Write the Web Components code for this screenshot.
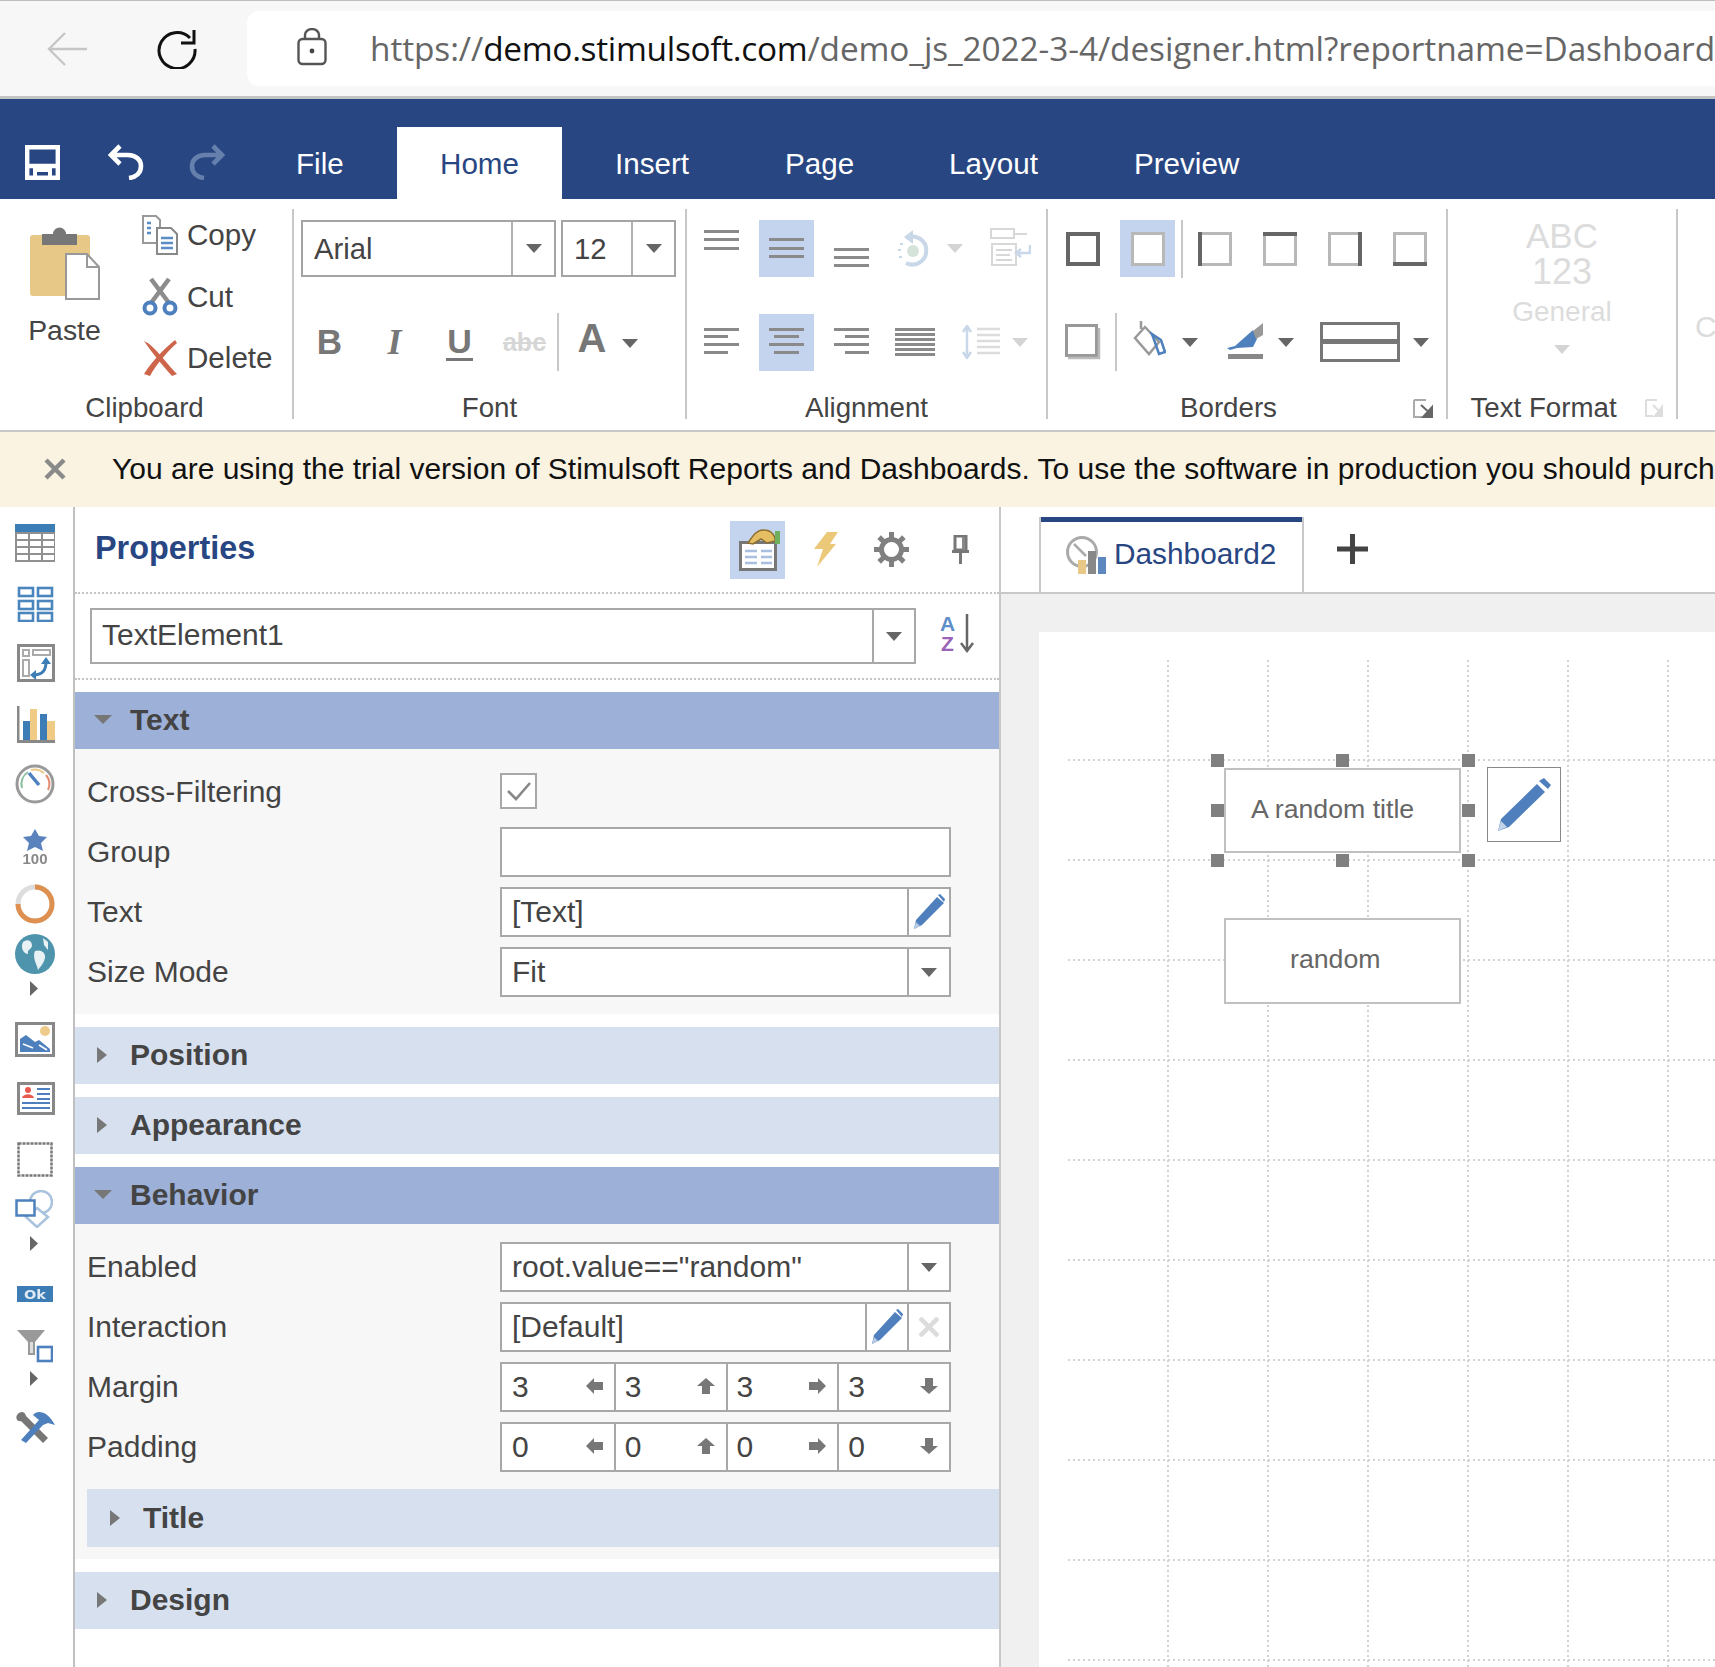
<!DOCTYPE html>
<html lang="en"><head><meta charset="utf-8"><title>Stimulsoft Designer</title>
<style>html,body{margin:0;padding:0;width:1715px;height:1667px;overflow:hidden;background:#fff;font-family:"Liberation Sans",Arial,sans-serif}</style>
</head><body>
<browser-bar></browser-bar>
<ribbon-tabs></ribbon-tabs>
<ribbon-bar>
  <ribbon-group label="Clipboard" style="width:292px" flat lpad="3">
    <r-row style="height:auto;align-items:flex-start">
      <paste-btn></paste-btn>
      <small-btns>
        <small-btn icon="copy" label="Copy"></small-btn>
        <small-btn icon="cut" label="Cut"></small-btn>
        <small-btn icon="del" label="Delete"></small-btn>
      </small-btns>
    </r-row>
  </ribbon-group>
  <ribbon-group label="Font" style="width:391px">
    <r-row style="padding-left:7px;gap:5px">
      <font-combo value="Arial" style="width:255px"></font-combo>
      <font-combo value="12" style="width:115px"></font-combo>
    </r-row>
    <r-row style="padding-left:3px;height:58px">
      <font-tool kind="b">B</font-tool><font-tool kind="i">I</font-tool><font-tool kind="u">U</font-tool><font-tool kind="s">abc</font-tool>
      <r-sep></r-sep>
      <font-tool kind="a">A</font-tool><ui-icon name="caret" style="margin:3px 0 0 9px"></ui-icon>
    </r-row>
  </ribbon-group>
  <ribbon-group label="Alignment" style="width:359px">
    <r-row style="padding-left:7px;gap:10px">
      <r-cell icon="vtop"></r-cell><r-cell icon="vmid" active></r-cell><r-cell icon="vbot"></r-cell>
      <ui-icon name="rotate" style="margin-left:8px"></ui-icon><ui-icon name="caretoff" style="margin-left:7px"></ui-icon>
      <ui-icon name="wrap" style="margin:-4px 0 0 17px"></ui-icon>
    </r-row>
    <r-row style="padding-left:7px;gap:10px;height:58px">
      <r-cell icon="hleft"></r-cell><r-cell icon="hcen" active></r-cell><r-cell icon="hright"></r-cell><r-cell icon="hjust" style="margin:0 2px 0 -2px"></r-cell>
      <ui-icon name="spacing" style="margin-left:8px"></ui-icon><ui-icon name="caretoff"></ui-icon>
    </r-row>
  </ribbon-group>
  <ribbon-group label="Borders" style="width:398px" launcher lpad="4">
    <r-row style="padding-left:7px;gap:9px">
      <r-cell icon="bAll"></r-cell><r-cell icon="bNone" active style="margin-left:1px"></r-cell>
      <r-sep style="margin:0 -5px 0 -3px"></r-sep>
      <r-cell icon="bL"></r-cell><r-cell icon="bT" style="margin-left:1px"></r-cell><r-cell icon="bR" style="margin-left:1px"></r-cell><r-cell icon="bB" style="margin-left:1px"></r-cell>
    </r-row>
    <r-row style="padding-left:7px;height:58px">
      <r-cell icon="bShadow"></r-cell><r-sep style="margin:0 16px 0 5px"></r-sep>
      <ui-icon name="fill" style="margin-top:-8px"></ui-icon><ui-icon name="caret" style="margin-left:16px"></ui-icon>
      <ui-icon name="pen" style="margin:-2px 0 0 29px"></ui-icon><ui-icon name="caret" style="margin-left:14px"></ui-icon>
      <ui-icon name="linebox" style="margin-left:26px"></ui-icon><ui-icon name="caret" style="margin-left:13px"></ui-icon>
    </r-row>
  </ribbon-group>
  <ribbon-group label="Text Format" style="width:228px" flat launcher off lpad="6"><format-btn></format-btn></ribbon-group>
  <clip-stub>C</clip-stub>
</ribbon-bar>
<trial-bar>You are using the trial version of Stimulsoft Reports and Dashboards. To use the software in production you should purch</trial-bar>
<main-area>
  <tool-rail></tool-rail>
  <prop-panel>
    <prop-section title="Text" open>
      <prop-row label="Cross-Filtering"><check-box></check-box></prop-row>
      <prop-row label="Group"><prop-field></prop-field></prop-row>
      <prop-row label="Text"><prop-field value="[Text]" btns="pencil"></prop-field></prop-row>
      <prop-row label="Size Mode"><prop-field value="Fit" btns="caret"></prop-field></prop-row>
    </prop-section>
    <prop-section title="Position"></prop-section>
    <prop-section title="Appearance"></prop-section>
    <prop-section title="Behavior" open>
      <prop-row label="Enabled"><prop-field value='root.value=="random"' btns="caret"></prop-field></prop-row>
      <prop-row label="Interaction"><prop-field value="[Default]" btns="pencil,xoff"></prop-field></prop-row>
      <prop-row label="Margin"><quad-field value="3"></quad-field></prop-row>
      <prop-row label="Padding"><quad-field value="0"></quad-field></prop-row>
      <prop-section title="Title" nested></prop-section>
    </prop-section>
    <prop-section title="Design"></prop-section>
  </prop-panel>
  <design-area></design-area>
</main-area>
<script>
const G='#8a8a8a',B='#4d80bd';
function lines(w,h,arr,col=G,sw=3){return `<svg width="${w}" height="${h}" viewBox="0 0 ${w} ${h}">`+arr.map(a=>`<rect x="${a[0]}" y="${a[1]}" width="${a[2]-a[0]}" height="${sw}" fill="${col}"/>`).join('')+`</svg>`}
function svg(w,h,s){return `<svg width="${w}" height="${h}" viewBox="0 0 ${w} ${h}">${s}</svg>`}
function box(s){const L='#b8b8b8',D='#666';let o=`<rect x="1.5" y="1.5" width="31" height="31" fill="#fff" stroke="${L}" stroke-width="3"/>`;
 if(s.includes('l'))o+=`<rect width="4" height="34" fill="${D}"/>`;if(s.includes('t'))o+=`<rect width="34" height="4" fill="${D}"/>`;
 if(s.includes('r'))o+=`<rect x="30" width="4" height="34" fill="${D}"/>`;if(s.includes('b'))o+=`<rect y="30" width="34" height="4" fill="${D}"/>`;return svg(34,34,o)}
const ICONS={
 back:svg(40,34,`<path d="M18 1 L2 17 L18 33 M2 17 H40" fill="none" stroke="#c6c6c6" stroke-width="2.4"/>`),
 reload:svg(40,40,`<path d="M33 9 A18 18 0 1 0 38 20" fill="none" stroke="#111" stroke-width="3"/><path d="M24 14 H37 V1" fill="none" stroke="#111" stroke-width="3"/>`),
 lock:svg(30,38,`<rect x="1.5" y="11" width="27" height="25" rx="4" fill="none" stroke="#555" stroke-width="2.4"/><path d="M8 11 V7 A7 6 0 0 1 22 7 V11" fill="none" stroke="#555" stroke-width="2.4"/><circle cx="15" cy="23" r="2.4" fill="#444"/>`),
 save:svg(35,35,`<path d="M2.2 2.2 H32.8 V32.8 H2.2 Z M2 21 H33" fill="none" stroke="#fff" stroke-width="4.4"/><path d="M10 33 V25 H25 V33" fill="none" stroke="#fff" stroke-width="4"/>`),
 undo:svg(36,36,`<path d="M12 2 L3 11 L12 20 M3 11 H20 C28 11 33 16 33 22 C33 29 28 33 21 34" fill="none" stroke="#fff" stroke-width="4.6"/>`),
 redo:svg(36,36,`<path d="M24 2 L33 11 L24 20 M33 11 H16 C8 11 3 16 3 22 C3 29 8 33 15 34" fill="none" stroke="#6580ad" stroke-width="4.6"/>`),
 paste:svg(70,75,`<rect x="0" y="10" width="60" height="61" rx="3" fill="#e8c886"/><rect x="12" y="9" width="35" height="11" fill="#777"/><path d="M23 9 a6.5 6.5 0 0 1 13 0z" fill="#777"/><path d="M36 29 H57 L69 42 V74 H36 Z" fill="#fff" stroke="#999" stroke-width="2"/><path d="M57 29 V42 H69" fill="none" stroke="#999" stroke-width="2"/>`),
 copy:svg(36,40,`<path d="M1 1 H14 L18 5 V28 H1 Z" fill="#fff" stroke="#999" stroke-width="2"/><path d="M5 8h4M5 13h4M5 18h4" stroke="#5b8cc3" stroke-width="2.5"/><path d="M15 13 H29 L35 19 V39 H15 Z" fill="#fff" stroke="#888" stroke-width="2"/><path d="M19 23h12M19 28h12M19 33h12" stroke="#5b8cc3" stroke-width="2.5"/>`),
 cut:svg(36,38,`<path d="M9 1 L27 25 M27 1 L9 25" stroke="#8c8c8c" stroke-width="4.5" fill="none"/><circle cx="8" cy="30" r="5.5" fill="#fff" stroke="#4d80bd" stroke-width="4"/><circle cx="28" cy="30" r="5.5" fill="#fff" stroke="#4d80bd" stroke-width="4"/>`),
 del:svg(36,38,`<path d="M2 2 C12 6 24 24 35 35 L30 37 C22 28 10 14 2 2Z" fill="#cd654a"/><path d="M33 1 L35 4 C24 14 14 26 8 37 L2 35 C10 22 22 10 33 1Z" fill="#cd654a"/>`),
 caret:svg(16,9,`<path d="M0 0H16L8 9Z" fill="#666"/>`),
 caretoff:svg(16,9,`<path d="M0 0H16L8 9Z" fill="#d4d4d4"/>`),
 vtop:lines(35,57,[[0,10,35],[0,18,35],[0,27,35]]),
 vmid:lines(35,57,[[0,18,35],[0,27,35],[0,35,35]]),
 vbot:lines(35,57,[[0,28,35],[0,36,35],[0,44,35]]),
 hleft:lines(35,30,[[0,1,35],[0,8,24],[0,16,35],[0,24,24]]),
 hcen:lines(35,30,[[0,1,35],[5,8,30],[0,16,35],[5,24,30]]),
 hright:lines(35,30,[[0,1,35],[11,8,35],[0,16,35],[11,24,35]]),
 hjust:lines(40,30,[[0,1,40],[0,6,40],[0,11,40],[0,16,40],[0,21,40],[0,26,40]]),
 rotate:svg(33,38,`<path d="M9 8 A14 14 0 1 1 9 33" fill="none" stroke="#c8d8e8" stroke-width="4"/><path d="M16 0 L16 14 L7 7Z" fill="#c8d8e8"/><circle cx="16" cy="21" r="6" fill="#d5e3da"/><path d="M3 14h3M1 20h3M2 27h3" stroke="#c8d8e8" stroke-width="2"/>`),
 wrap:svg(41,38,`<rect x="1" y="1" width="23" height="9" fill="none" stroke="#d8d8d8" stroke-width="2"/><path d="M24 6h13M2 16h24v21H2zM6 22h16M6 27h14M6 32h16" fill="none" stroke="#d8d8d8" stroke-width="2"/><path d="M40 17 V25 H27 M31 21 L26 25 L31 29" fill="none" stroke="#c8d8e8" stroke-width="2.5"/>`),
 spacing:svg(40,34,`<path d="M5 2 V32 M1 7 L5 1 L9 7 M1 27 L5 33 L9 27" fill="none" stroke="#c8d8e8" stroke-width="2.5"/><path d="M15 4H38M15 10H38M15 16H38M15 22H38M15 28H38" stroke="#dcdcdc" stroke-width="2.5"/>`),
 bAll:box('ltrb'),bNone:box(''),bL:box('l'),bT:box('t'),bR:box('r'),bB:box('b'),
 bShadow:svg(36,36,`<rect x="1.5" y="1.5" width="30" height="30" fill="#fff" stroke="#999" stroke-width="3"/><path d="M3 34 H34 V4" fill="none" stroke="#bbb" stroke-width="2.5"/>`),
 fill:svg(33,36,`<path d="M8 1 V9 M2 18 L12 7 L26 22 L16 34 Z" fill="#fff" stroke="#999" stroke-width="2.5"/><path d="M19 14 L28 20 L32 32 L26 34 Z" fill="none" stroke="#4d80bd" stroke-width="2.5"/>`),
 pen:svg(37,36,`<path d="M0 25 L8 23 L26 7 L30 16 L26 24 L10 25 L3 27Z" fill="#4d80bd"/><path d="M26 8 L36 0 L36 12 L29 16Z" fill="#999"/><rect x="1" y="31" width="35" height="5" fill="#888"/>`),
 linebox:svg(80,40,`<rect x="1.5" y="1.5" width="77" height="37" fill="#fff" stroke="#777" stroke-width="3"/><rect y="17" width="80" height="5" fill="#777"/>`),
 launch:svg(20,19,`<path d="M1 1H13M1 1V18H9" fill="none" stroke="#aaa" stroke-width="2"/><path d="M8 6 L19 16 M19 8 V18 H10 Z" stroke="#666" stroke-width="2" fill="#666"/>`),
 launchoff:svg(18,18,`<path d="M1 1H12M1 1V17H8" fill="none" stroke="#ddd" stroke-width="2"/><path d="M8 6 L17 15 M17 8 V17 H10 Z" stroke="#ddd" stroke-width="2" fill="#ddd"/>`),
 close:svg(22,22,`<path d="M2 2 L20 20 M20 2 L2 20" stroke="#8a8a8a" stroke-width="4.5"/>`),
 rTable:svg(40,38,`<rect width="40" height="38" fill="#909090"/><rect width="40" height="8" fill="#3d7db5"/>${[10,17,24,31].map(y=>[2,15,28].map(x=>`<rect x="${x}" y="${y}" width="11" height="5" fill="#fff"/>`).join('')).join('')}`),
 rCards:svg(37,36,[1,14,26].map(y=>[1,20].map(x=>`<rect x="${x+1}" y="${y+1}" width="14" height="8" fill="#fff" stroke="#4a86bd" stroke-width="2.6"/>`).join('')).join('')),
 rPivot:svg(38,38,`<rect x="1.5" y="1.5" width="35" height="35" fill="#fff" stroke="#888" stroke-width="3"/><rect x="6" y="6" width="6" height="6" fill="none" stroke="#aaa" stroke-width="2"/><rect x="16" y="6" width="17" height="5" fill="none" stroke="#aaa" stroke-width="2"/><rect x="6" y="16" width="6" height="16" fill="none" stroke="#aaa" stroke-width="2"/><path d="M16 31 C25 31 29 27 29 18" fill="none" stroke="#3d7db5" stroke-width="3"/><path d="M24 20 L29 13 L34 20Z M19 26 V36 L13 31Z" fill="#3d7db5"/>`),
 rChart:svg(38,37,`<path d="M1 0 V35.5 H38" fill="none" stroke="#888" stroke-width="3"/><rect x="6" y="15" width="7" height="19" fill="#3d7db5"/><rect x="13" y="3" width="7" height="31" fill="#efcb85"/><rect x="23" y="8" width="7" height="26" fill="#3d7db5"/><rect x="30" y="15" width="8" height="19" fill="#efcb85"/>`),
 rGauge:svg(40,40,`<circle cx="20" cy="20" r="18" fill="#fff" stroke="#999" stroke-width="3"/><path d="M7 24 A14 14 0 0 1 13 8" fill="none" stroke="#8cc0a0" stroke-width="2"/><path d="M16 6 A14 14 0 0 1 29 9" fill="none" stroke="#eecb8a" stroke-width="2"/><path d="M31 11 A14 14 0 0 1 33 26" fill="none" stroke="#e58a70" stroke-width="2"/><path d="M14 9 L24 21" stroke="#4d80bd" stroke-width="3.5"/>`),
 rStar:`<svg width="26" height="38" viewBox="0 0 26 38" style="overflow:visible"><path d="M13 0 L17 7 L25 8 L19 14 L21 22 L13 18 L5 22 L7 14 L1 8 L9 7Z" fill="#5a82bd"/><text x="13" y="35" font-family="Liberation Sans" font-weight="700" font-size="14" text-anchor="middle" fill="#888" textLength="25" lengthAdjust="spacingAndGlyphs">100</text></svg>`,
 rDonut:svg(40,40,`<circle cx="20" cy="20" r="17" fill="none" stroke="#ddd" stroke-width="5"/><path d="M20 3 A17 17 0 1 1 3 20" fill="none" stroke="#dd9050" stroke-width="5"/>`),
 rGlobe:svg(40,40,`<circle cx="20" cy="20" r="20" fill="#4f94ad"/><path d="M8 8 C14 4 17 8 17 12 C16 16 12 15 13 20 C9 20 5 14 8 8Z M20 17 C25 15 31 18 30 24 C28 31 25 33 23 36 C22 30 17 24 20 17Z M28 4 L33 8 L33 16 L29 11Z" fill="#e8f2f5"/>`),
 rArrow:svg(8,15,`<path d="M0 0 L8 7.5 L0 15Z" fill="#666"/>`),
 rImage:svg(40,35,`<rect x="1.5" y="1.5" width="37" height="32" fill="#fff" stroke="#888" stroke-width="3"/><circle cx="30" cy="9" r="5" fill="#eecb8a"/><path d="M5 30 V17 L11 13 L20 20 L24 18 L35 27 V30Z" fill="#4d80bd"/><path d="M8 22 L18 26 M24 23 L32 28" stroke="#fff" stroke-width="1.5"/>`),
 rCard:svg(38,33,`<rect x="1.5" y="1.5" width="35" height="30" fill="#fff" stroke="#888" stroke-width="3"/><circle cx="11" cy="8" r="3" fill="#e85a50"/><path d="M5 16 C6 11 16 11 17 16Z" fill="#e85a50"/><path d="M20 7H33M20 12H33M20 17H33M5 21H33M5 26H33" stroke="#4d80bd" stroke-width="2"/>`),
 rDash:svg(36,35,`<rect x="1.5" y="1.5" width="33" height="32" fill="none" stroke="#777" stroke-width="2.5" stroke-dasharray="3 1"/>`),
 rShapes:svg(38,38,`<circle cx="26" cy="12" r="11" fill="#fff" stroke="#a9c2dd" stroke-width="2.5"/><path d="M22 18 L33 27 L22 37 L11 27Z" fill="#fff" stroke="#a9c2dd" stroke-width="2.5"/><rect x="1.5" y="10.5" width="18" height="15" fill="#fff" stroke="#4d80bd" stroke-width="2.5"/>`),
 rOk:`<svg width="36" height="16" viewBox="0 0 36 16"><rect width="36" height="16" fill="#3d7db5"/><text x="18" y="12.5" font-family="DejaVu Sans" font-weight="700" font-size="12" text-anchor="middle" fill="#dfeaf4" textLength="22" lengthAdjust="spacingAndGlyphs">Ok</text></svg>`,
 rFilter:svg(36,34,`<path d="M0 1 H28 L18 13 V26 H11 V13Z" fill="#999"/><path d="M13 13 V24 H16 V13" fill="#ddd"/><rect x="21" y="18" width="14" height="14" fill="#fff" stroke="#4d80bd" stroke-width="2.6"/>`),
 rTools:svg(40,34,`<path d="M2 5 C6 0 10 2 11 6 L33 28 L28 33 L6 11 C3 12 0 9 2 5Z" fill="#777"/><path d="M6 30 L24 10 L18 5 C22 0 32 0 40 15 L33 13 L28 15 L11 33Z" fill="#4d80bd"/>`),
 props:svg(42,42,`<rect x="1.5" y="13.5" width="35" height="27" fill="#fff" stroke="#777" stroke-width="3"/><path d="M6 22H18M6 28H18M6 34H18M22 22H33M22 28H33M22 34H33" stroke="#a8bfe0" stroke-width="2.5"/><path d="M9 14 C13 8 18 0 25 1 C33 1 37 8 36 12 L28 14 L22 10 L14 15Z" fill="#e5bd62" stroke="#8a6f30" stroke-width="1.5"/><rect x="36" y="2" width="5" height="13" fill="#6fb05e"/>`),
 bolt:svg(24,35,`<path d="M13 0 H24 L16 12 H22 L3 35 L9 17 H0Z" fill="#ecc978"/>`),
 gear:(()=>{let t='';for(let i=0;i<8;i++)t+=`<rect x="15" y="0" width="5" height="7" fill="#808080" transform="rotate(${i*45} 17.5 17.5)"/>`;return svg(35,35,t+`<circle cx="17.5" cy="17.5" r="10" fill="none" stroke="#808080" stroke-width="5"/>`)})(),
 pin:svg(19,29,`<path d="M4 1 H15 V15 H4 Z" fill="none" stroke="#777" stroke-width="3"/><rect x="1" y="15" width="17" height="3" fill="#777"/><rect x="8" y="15" width="3" height="14" fill="#777"/><rect x="11" y="2" width="3" height="13" fill="#888"/>`),
 sort:`<div style="position:relative;width:37px;height:40px;font:700 21px/20px 'Liberation Sans',sans-serif"><span style="position:absolute;left:0;top:0;height:20px;color:#5f8fc8">A</span><span style="position:absolute;left:1px;top:20px;height:20px;color:#9a62b8">Z</span><svg width="37" height="40" viewBox="0 0 37 40" style="position:absolute;left:0;top:0"><path d="M27 0 V37 M21 29 L27 37 L33 29" fill="none" stroke="#666" stroke-width="2.5"/></svg></div>`,
 pencil:svg(32,36,`<path d="M1 35 L3 26 L24 3 L31 9 L9 31 Z" fill="#4f7fbd"/><path d="M25 1 L27 0 L32 5 L31 8 Z" fill="#4f7fbd"/><path d="M1 35 L3 28 L7 32 Z" fill="#b9cbe3"/>`),
 pencilBig:svg(53,53,`<path d="M0 53 L3 41 L39 6 L47 14 L11 49 Z" fill="#4f7fbd"/><path d="M41 3 L46 0 L53 7 L50 11 Z" fill="#4f7fbd"/><path d="M0 53 L3 43 L9 49 Z" fill="#c3d3e8"/>`),
 xoff:svg(20,20,`<path d="M1 1 L19 19 M19 1 L1 19" stroke="#dcdcdc" stroke-width="4.5"/>`),
 al:svg(17,16,`<path d="M0 8 L8 0 V4 H17 V12 H8 V16Z" fill="#777"/>`),
 au:svg(18,16,`<path d="M9 0 L18 8 H13 V16 H5 V8 H0Z" fill="#777"/>`),
 ar:svg(17,16,`<path d="M17 8 L9 0 V4 H0 V12 H9 V16Z" fill="#777"/>`),
 ad:svg(18,16,`<path d="M9 16 L18 8 H13 V0 H5 V8 H0Z" fill="#777"/>`),
 check:svg(24,20,`<path d="M1 10 L9 18 L23 2" fill="none" stroke="#888" stroke-width="2.6"/>`),
 dash:svg(40,38,`<circle cx="16" cy="16" r="14.5" fill="#fff" stroke="#aaa" stroke-width="3"/><path d="M8 8 L20 20" stroke="#aaa" stroke-width="2.5"/><rect x="12" y="24" width="8" height="14" fill="#e8c886"/><rect x="22" y="15" width="8" height="23" fill="#888"/><rect x="32" y="21" width="8" height="17" fill="#5d88bf"/>`),
 plus:svg(31,30,`<rect y="12.5" width="31" height="5" fill="#444"/><rect x="13" width="5" height="30" fill="#444"/>`)
};
function def(name,css,html){customElements.define(name,class extends HTMLElement{
  constructor(){super();this.attachShadow({mode:'open'})}
  connectedCallback(){if(this._d)return;this._d=1;const h=typeof html==='function'?html(this):html;this.shadowRoot.innerHTML=`<style>${css}</style>${h}`;}
})}
const A=(e,n,d='')=>e.hasAttribute(n)?e.getAttribute(n):d;
def('ui-icon',':host{display:inline-flex;flex:none;line-height:0}svg{filter:blur(.45px)}',e=>ICONS[A(e,'name')]||'');
def('browser-bar',`:host{display:flex;align-items:flex-start;background:#f7f7f7;border-top:1px solid #bdbdbd;border-bottom:3px solid #c4c4c4;height:95px;overflow:hidden}
 .nav{display:flex;align-items:center;height:75px;margin-top:10px;flex:none}
 .url{flex:1;margin-top:10px;height:75px;background:#fff;border-radius:12px 0 0 12px;margin-left:50px;display:flex;align-items:center;padding-left:50px;white-space:nowrap;overflow:hidden;font:33.4px/75px "Open Sans",sans-serif;letter-spacing:-.09px;color:#666}
 b{font-weight:400;color:#111;letter-spacing:-.3px}`,
 `<div class="nav" style="padding-left:47px"><ui-icon name="back" style="margin-right:70px"></ui-icon><ui-icon name="reload"></ui-icon></div>
 <div class="url"><ui-icon name="lock" style="margin-top:-3px;margin-right:43px"></ui-icon><span>https://<b>demo.stimulsoft.com</b>/demo_js_2022-3-4/designer.html?reportname=Dashboard</span></div>`);
def('ribbon-tabs',`:host{display:flex;align-items:flex-end;height:100px;background:#284682;font:29.6px "Liberation Sans",Arial,sans-serif;color:#fff;overflow:hidden}
 .qa{display:flex;height:72px;align-items:center;padding-left:25px;flex:none;width:272px;box-sizing:border-box;gap:48px}.qa ui-icon{margin-top:-2px}
 .qa ui-icon:nth-child(3){margin-left:-3px}
 .tab{height:72px;display:flex;align-items:center;justify-content:flex-start;flex:none;padding-top:2px;box-sizing:border-box;line-height:1}
 .on{background:#fff;color:#284682;justify-content:center}`,
 `<div class="qa"><ui-icon name="save"></ui-icon><ui-icon name="undo"></ui-icon><ui-icon name="redo"></ui-icon></div>
 <div class="tab" style="width:125px;padding-left:24px">File</div><div class="tab on" style="width:165px">Home</div>
 <div class="tab" style="width:223px;padding-left:53px">Insert</div><div class="tab" style="width:164px">Page</div>
 <div class="tab" style="width:187px">Layout</div><div class="tab" style="margin-left:-2px">Preview</div>`);
def('ribbon-bar',`:host{display:flex;height:231px;border-bottom:2px solid #c8c8c8;background:#fff;font:29px "Liberation Sans",Arial,sans-serif;color:#444;overflow:hidden}`,`<slot></slot>`);
def('ribbon-group',`:host{display:flex;flex-direction:column;flex:none;height:210px;margin-top:10px;border-right:2px solid #c8c8c8;box-sizing:content-box}
 .b{flex:1;display:flex;flex-direction:column;gap:36px;padding-top:11px;min-height:0}:host([flat]) .b{padding-top:0;gap:0}
 .l{display:flex;align-items:center;height:24px;font-size:27.7px;line-height:24px;position:relative;top:1px}.t{flex:1;text-align:center}ui-icon{margin-right:13px}`,
 e=>`<div class="b"><slot></slot></div><div class="l"><span class="t" style="padding-right:${A(e,'lpad','0')}px">${A(e,'label')}</span>${e.hasAttribute('launcher')?`<ui-icon name="${e.hasAttribute('off')?'launchoff':'launch'}"></ui-icon>`:''}</div>`);
def('r-row',':host{display:flex;align-items:center;height:57px;flex:none}','<slot></slot>');
def('r-sep',':host{display:block;flex:none;width:2px;height:58px;background:#c8c8c8}','');
def('r-cell',`:host{display:flex;flex:none;width:55px;height:57px;align-items:center;justify-content:center}:host([active]){background:#c5d4ee}`,e=>`<ui-icon name="${A(e,'icon')}"></ui-icon>`);
def('paste-btn',`:host{display:flex;flex-direction:column;align-items:center;width:80px;margin-left:25px;padding-top:16px;flex:none}div{line-height:36px;margin-top:12px;font-size:28.4px;margin-left:-1px}`,`<ui-icon name="paste"></ui-icon><div>Paste</div>`);
def('small-btns',':host{display:flex;flex-direction:column;margin-left:37px;gap:9.5px}','<slot></slot>');
def('small-btn',':host{display:flex;align-items:center;height:52px;gap:9px;white-space:nowrap;font-size:29.6px}',e=>`<ui-icon name="${A(e,'icon')}"></ui-icon><span>${A(e,'label')}</span>`);
def('font-combo',`:host{display:flex;flex:none;height:57px;box-sizing:border-box;border:2px solid #a4a4a4;background:#fff;font-size:29.3px}
 .v{flex:1;display:flex;align-items:center;padding-left:11px;border-right:2px solid #b0b0b0}.c{width:41px;display:flex;align-items:center;justify-content:center}`,
 e=>`<div class="v">${A(e,'value')}</div><div class="c"><ui-icon name="caret"></ui-icon></div>`);
def('font-tool',`:host{display:flex;flex:none;width:65px;height:58px;align-items:center;justify-content:center;color:#777;line-height:1}
 :host([kind=b]) span{font:700 35px "Liberation Sans"}:host([kind=i]) span{font:italic 700 36px "Liberation Serif"}
 :host([kind=u]) span{font:700 34px "Liberation Sans";border-bottom:3px solid #777;line-height:34px;padding:0 1px}
 :host([kind=s]) span{font:700 25px "Liberation Sans";color:#d6d6d6;text-decoration:line-through}
 :host([kind=a]){width:42px;margin-left:12px;margin-top:-8px}:host([kind=a]) span{font:700 40px "Liberation Sans"}`,`<span><slot></slot></span>`);
def('format-btn',`:host{display:flex;flex-direction:column;align-items:center;color:#dcdcdc;padding-top:9px}
 div{line-height:36px;font-size:35px}.g{font-size:28px;margin-top:4px}ui-icon{margin-top:15px}`,`<div>ABC</div><div style="font-size:36px">123</div><div class="g">General</div><ui-icon name="caretoff"></ui-icon>`);
def('clip-stub',`:host{display:block;flex:none;padding:110px 0 0 17px;color:#dcdcdc;font-size:30px;line-height:36px}`,'<slot></slot>');
def('trial-bar',`:host{display:flex;align-items:center;height:75px;padding-bottom:2px;box-sizing:border-box;background:#faf3e2;color:#111;white-space:nowrap;overflow:hidden;font:30px "Liberation Sans",Arial,sans-serif;padding-left:44px}
 ui-icon{margin-right:46px}`,`<ui-icon name="close"></ui-icon><slot></slot>`);
def('main-area',':host{display:flex;height:1160px;overflow:hidden}','<slot></slot>');
const RAIL=[['rTable',17,15],['rCards',24,17],['rPivot',22,17],['rChart',24,17],['rGauge',21,15],['rStar',25,22],['rDonut',17,15],['rGlobe',10,15],['rArrow',7,30],['rImage',26,15],['rCard',25,17],['rDash',27,17],['rShapes',13,15],['rArrow',8,30],['rOk',35,17],['rFilter',27,17],['rArrow',8,30],['rTools',24,15]];
def('tool-rail',`:host{display:block;flex:none;width:73px;border-right:2px solid #c0c0c0;background:#fff}ui-icon{display:flex;width:fit-content}`,
 RAIL.map(r=>`<ui-icon name="${r[0]}" style="margin:${r[1]}px 0 0 ${r[2]}px"></ui-icon>`).join(''));
def('prop-panel',`:host{display:block;flex:none;width:924px;background:#fff;font:30px "Liberation Sans",Arial,sans-serif;color:#444;border-right:2px solid #c8c8c8}
 .h{display:flex;align-items:center;height:85px;border-bottom:2px dotted #c4c4c4;box-sizing:content-box}
 h2{margin:-2px 0 0 20px;font:700 32.4px "Liberation Sans",Arial,sans-serif;color:#284682;flex:1}
 .sel{display:flex;align-items:center;height:84px;border-bottom:2px dotted #c4c4c4;padding-left:15px}
 .on{width:55px;height:58px;background:#c5d4ee;display:flex;align-items:center;justify-content:center;padding-left:4px;box-sizing:border-box}
 .combo{display:flex;width:826px;height:56px;box-sizing:border-box;border:2px solid #a8a8a8;font-size:30px}
 .combo .v{flex:1;display:flex;align-items:center;padding:0 0 2px 10px;border-right:2px solid #a8a8a8}.combo .c{width:40px;display:flex;align-items:center;justify-content:center}
 .list{display:flex;flex-direction:column;padding-top:12px}`,
 `<div class="h"><h2>Properties</h2><div class="on"><ui-icon name="props"></ui-icon></div><ui-icon name="bolt" style="margin-left:29px"></ui-icon><ui-icon name="gear" style="margin-left:36px"></ui-icon><ui-icon name="pin" style="margin:0 29px 0 42px"></ui-icon></div>
 <div class="sel"><div class="combo"><div class="v">TextElement1</div><div class="c"><ui-icon name="caret"></ui-icon></div></div><ui-icon name="sort" style="margin:-4px 0 0 24px"></ui-icon></div>
 <div class="list"><slot></slot></div>`);
def('prop-section',`:host{display:block;flex:none}:host(:not(:first-child)){margin-top:13px}:host([nested]){margin:12px 0 0 12px !important}
 .hd{display:flex;align-items:center;height:57px;box-sizing:border-box;padding-bottom:2px;background:#d7e0ef;padding-left:22px;font-weight:700;color:#444}:host([nested]) .hd{padding-left:23px;height:58px;padding-bottom:0}
 :host([open]) .hd{background:#9db0d7}
 .a{width:33px;display:flex;align-items:center}.r{width:0;height:0;border-left:10px solid #777;border-top:8px solid transparent;border-bottom:8px solid transparent}
 .d{width:0;height:0;border-top:9px solid #777;border-left:9px solid transparent;border-right:9px solid transparent;margin-left:-3px}
 .bd{background:#f7f7f7;padding:13px 0 12px}`,
 e=>{const o=e.hasAttribute('open');return `<div class="hd"><span class="a"><span class="${o?'d':'r'}"></span></span>${A(e,'title')}</div>${o?'<div class="bd"><slot></slot></div>':''}`});
def('prop-row',`:host{display:flex;align-items:center;height:60px;padding-left:12px}.l{width:413px;flex:none}`,e=>`<div class="l">${A(e,'label')}</div><slot></slot>`);
def('check-box',`:host{display:flex;width:37px;height:36px;box-sizing:border-box;border:2px solid #a8a8a8;background:#fff;align-items:center;justify-content:center;margin-top:-2px}`,`<ui-icon name="check"></ui-icon>`);
def('prop-field',`:host{display:flex;width:451px;height:50px;box-sizing:border-box;border:2px solid #a8a8a8;background:#fff}
 .v{flex:1;display:flex;align-items:center;padding-left:10px;white-space:nowrap}.c{width:40px;flex:none;border-left:2px solid #a8a8a8;display:flex;align-items:center;justify-content:center;box-sizing:content-box}`,
 e=>`<div class="v">${A(e,'value')}</div>`+A(e,'btns').split(',').filter(Boolean).map(b=>`<div class="c"><ui-icon name="${b}"></ui-icon></div>`).join(''));
def('quad-field',`:host{display:grid;grid-template-columns:repeat(4,1fr);width:451px;height:50px;box-sizing:border-box;border:2px solid #a8a8a8;background:#fff}
 .q{display:flex;align-items:center;justify-content:space-between;padding:0 11px 0 10px}.q+.q{border-left:2px solid #a8a8a8;padding-left:9px}.q ui-icon{margin-top:-2px}`,
 e=>['al','au','ar','ad'].map(a=>`<div class="q"><span>${A(e,'value')}</span><ui-icon name="${a}"></ui-icon></div>`).join(''));
let grid='';for(let x=129;x<700;x+=100)grid+=`<line x1="${x}" y1="28" x2="${x}" y2="1035"/>`;for(let y=128;y<1040;y+=100)grid+=`<line x1="29" y1="${y}" x2="680" y2="${y}"/>`;
def('design-area',`:host{display:flex;flex-direction:column;flex:1;min-width:0;background:#f0f0f0;font-family:"Liberation Sans",Arial,sans-serif;overflow:hidden}
 .bar{display:flex;height:85px;background:#fff;border-bottom:2px solid #c8c8c8;flex:none;align-items:flex-start}
 .tab{display:flex;align-items:center;margin:10px 0 0 38px;height:75px;width:265px;box-sizing:border-box;border:2px solid #c8c8c8;border-width:0 2px;box-shadow:inset 0 5px 0 #284682;padding:0 0 0 25px;color:#284682;font-size:29.8px;gap:8px}
 .tab span{margin-top:-2px}
 .plus{margin:27px 0 0 33px}
 .page{position:relative;flex:1;margin:38px 0 0 38px;background:#fff}`,
 `<div class="bar"><div class="tab"><ui-icon name="dash"></ui-icon><span>Dashboard2</span></div><ui-icon name="plus" class="plus"></ui-icon></div>
 <div class="page"><svg width="676" height="1035" style="position:absolute;left:0;top:0" fill="none" stroke="#d2d2d2" stroke-width="2" stroke-dasharray="2 3">${grid}</svg>
 <dash-element label="A random title" selected style="left:185px;top:136px;height:85px;--pl:25px;--pb:2px"></dash-element>
 <dash-element label="random" style="left:185px;top:286px;height:86px;--pl:64px;--pb:3px"></dash-element>
 <edit-btn style="left:448px;top:135px"></edit-btn></div>`);
def('dash-element',`:host{position:absolute;width:237px;box-sizing:border-box;border:2px solid #c0c0c0;background:#fff;color:#666;font-size:26.7px;display:flex;align-items:center;padding-left:var(--pl);padding-bottom:var(--pb)}
 i{position:absolute;width:13px;height:13px;background:#808080}`,
 e=>`<span>${A(e,'label')}</span>`+(e.hasAttribute('selected')?[[-15,-16],[110,-16],[236,-16],[-15,34],[236,34],[-15,84],[110,84],[236,84]].map(p=>`<i style="left:${p[0]}px;top:${p[1]}px"></i>`).join(''):''));
def('edit-btn',`:host{position:absolute;width:74px;height:75px;box-sizing:border-box;border:1px solid #888;background:#fff;display:flex;align-items:center;justify-content:center}`,`<ui-icon name="pencilBig"></ui-icon>`);
</script>
</body></html>
